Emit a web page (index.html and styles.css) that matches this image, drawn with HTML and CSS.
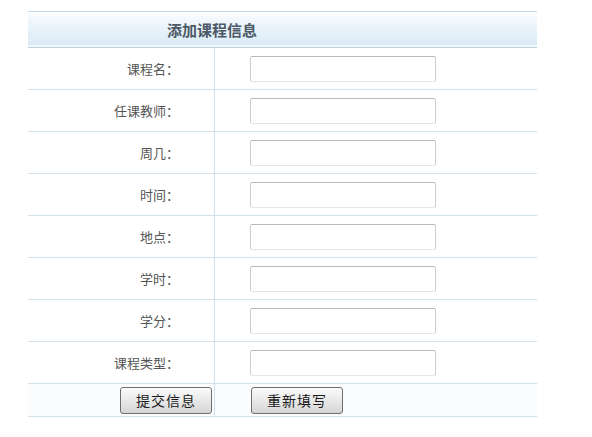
FILE: index.html
```html
<!DOCTYPE html>
<html lang="zh-CN">
<head>
    <meta charset="UTF-8">
    <title>添加课程信息</title>
    <link rel="stylesheet" href="styles.css">
</head>
<body>
    <form class="course-form">
        <div class="form-head">添加课程信息</div>
        <div class="form-row">
            <label class="form-label">课程名：</label>
            <div class="form-field"><input type="text" class="form-input"></div>
        </div>
        <div class="form-row">
            <label class="form-label">任课教师：</label>
            <div class="form-field"><input type="text" class="form-input"></div>
        </div>
        <div class="form-row">
            <label class="form-label">周几：</label>
            <div class="form-field"><input type="text" class="form-input"></div>
        </div>
        <div class="form-row">
            <label class="form-label">时间：</label>
            <div class="form-field"><input type="text" class="form-input"></div>
        </div>
        <div class="form-row">
            <label class="form-label">地点：</label>
            <div class="form-field"><input type="text" class="form-input"></div>
        </div>
        <div class="form-row">
            <label class="form-label">学时：</label>
            <div class="form-field"><input type="text" class="form-input"></div>
        </div>
        <div class="form-row">
            <label class="form-label">学分：</label>
            <div class="form-field"><input type="text" class="form-input"></div>
        </div>
        <div class="form-row">
            <label class="form-label">课程类型：</label>
            <div class="form-field"><input type="text" class="form-input"></div>
        </div>
        <div class="form-row form-actions">
            <div class="form-label"><button type="submit" class="btn">提交信息</button></div>
            <div class="form-field"><button type="reset" class="btn">重新填写</button></div>
        </div>
    </form>
</body>
</html>
```

FILE: styles.css
```css
body {
    margin: 0;
    background: #fff;
    font-family: "Noto Sans CJK SC", "Noto Sans", sans-serif;
    color: #555;
}

.course-form {
    width: 509px;
    margin: 11px 0 0 28px;
}

.form-head {
    height: 35px;
    line-height: 35px;
    border-top: 1px solid #c3d6e3;
    border-bottom: 1px solid #bcd0de;
    background: linear-gradient(#fafdff, #eaf4fb 40%, #d9eaf6);
    box-shadow: inset 0 1px 0 #fff, inset 0 -2px 0 #f3f8fb;
    padding-left: 139px;
    font-size: 15px;
    font-weight: bold;
    color: #4d5966;
}

.form-row {
    display: grid;
    grid-template-columns: 187px 1fr;
    height: 41px;
    border-bottom: 1px solid #d2e0ea;
}

.form-label {
    display: flex;
    align-items: center;
    justify-content: flex-end;
    padding-right: 35px;
    border-right: 1px solid #d2e0ea;
    font-size: 13px;
}

.form-field {
    display: flex;
    align-items: center;
    padding-left: 35px;
}

.form-input {
    box-sizing: border-box;
    width: 186px;
    height: 26px;
    margin: 0;
    border: 1px solid #cfcfcf;
    border-top-color: #b9b9b9;
    border-bottom-color: #e6e6e6;
    border-radius: 2px;
    background: #fff;
}

.form-actions {
    height: 32px;
    background: #fafcfd;
}

.form-actions .form-label {
    padding-right: 2px;
}

.form-actions .form-field {
    padding-left: 36px;
}

.btn {
    box-sizing: border-box;
    width: 92px;
    height: 27px;
    margin: 0;
    padding: 0;
    border: 1px solid #6f6f6f;
    border-radius: 3px;
    background: linear-gradient(#fbfbfb, #e9e9e9 50%, #d6d6d6);
    font-family: "Noto Sans CJK SC", sans-serif;
    font-size: 14px;
    color: #1a1a1a;
    letter-spacing: 1px;
}
```
